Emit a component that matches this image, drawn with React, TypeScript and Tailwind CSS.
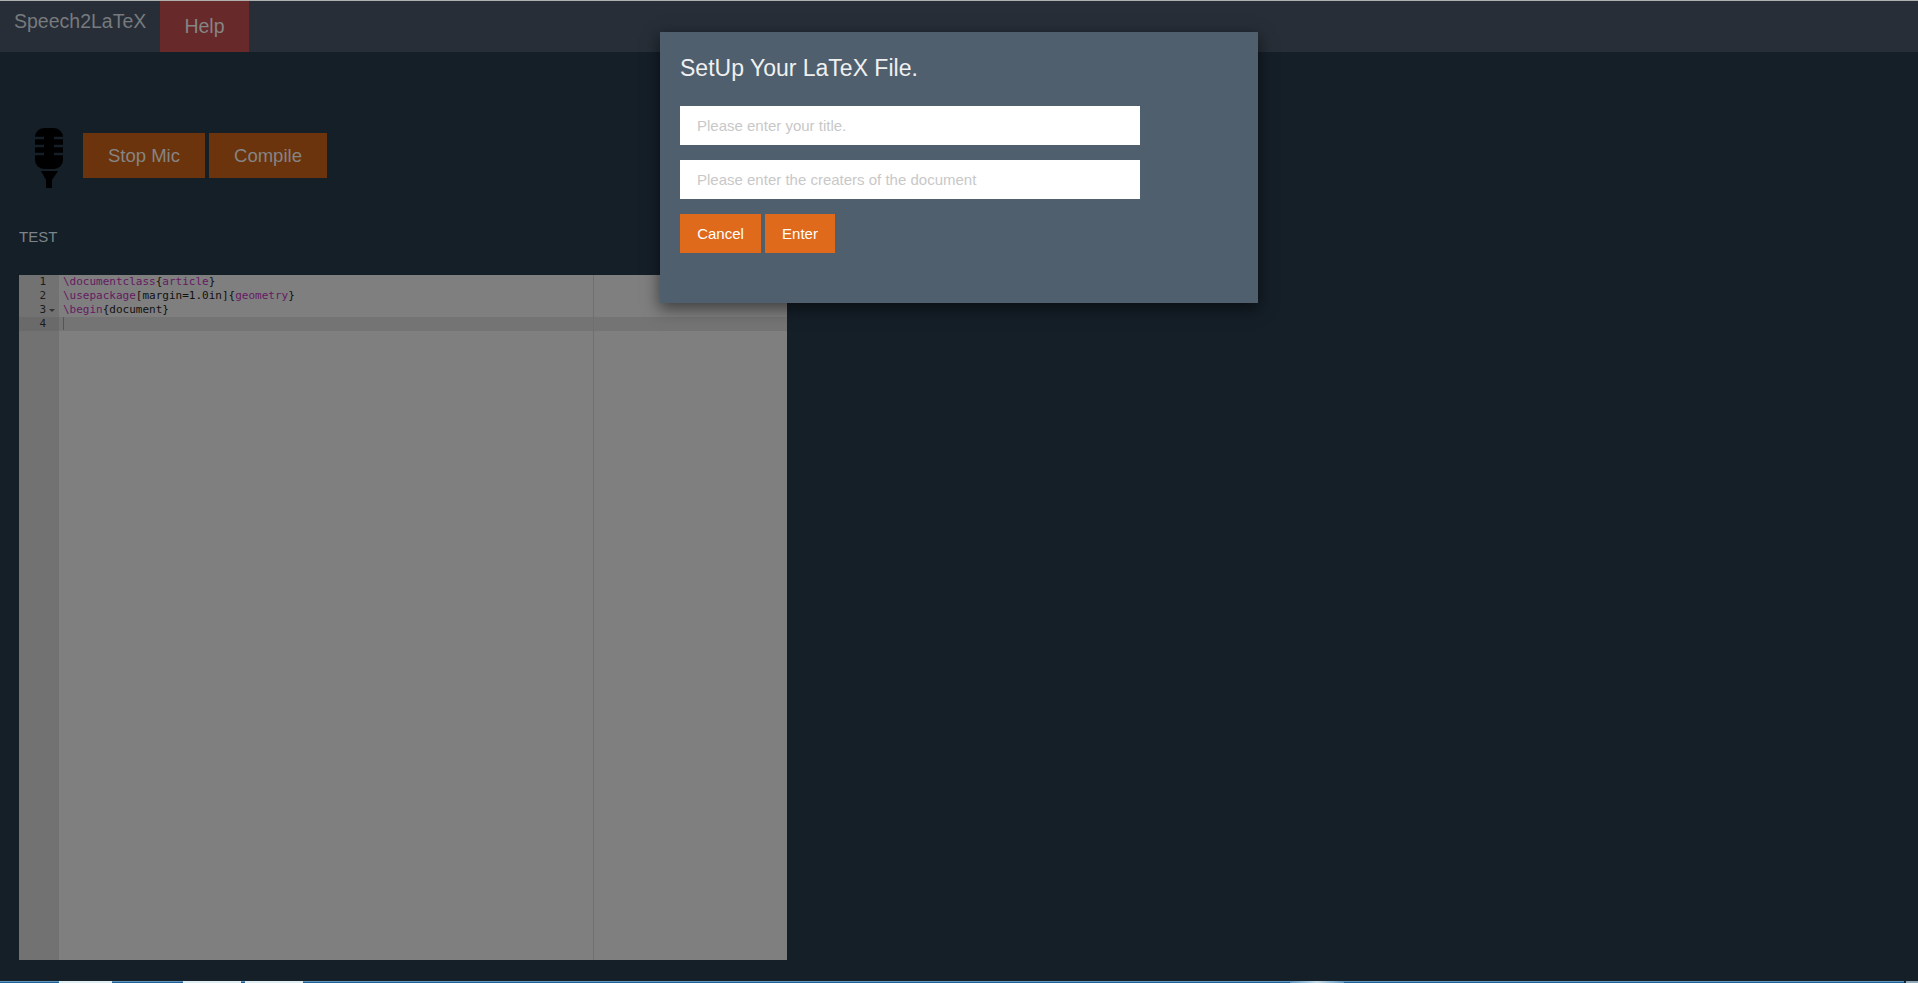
import React from 'react';

const Mic = () => (
  <svg width="28" height="60" viewBox="0 0 28 60" className="shrink-0">
    <rect x="0" y="0" width="28" height="41" rx="9" fill="#000" />
    <path d="M0 10h9M0 18h9M0 26h9M19 10h9M19 18h9M19 26h9" stroke="#151f28" strokeWidth="2.5" />
    <path d="M6 43h17l-6 9v8h-6v-8z" fill="#000" />
  </svg>
);

const Kw = ({ children }: { children: React.ReactNode }) => <span className="text-[#651a62]">{children}</span>;

const codeLines = [
  <><Kw>\documentclass</Kw>{'{'}<Kw>article</Kw>{'}'}</>,
  <><Kw>\usepackage</Kw>[margin=1.0in]{'{'}<Kw>geometry</Kw>{'}'}</>,
  <><Kw>\begin</Kw>{'{document}'}</>,
  <span className="inline-block w-px h-[13px] bg-[#555] align-top" />,
];

const Editor = () => (
  <div className="ml-[19px] mt-[28px] w-[768px] h-[685px] bg-[#7f7f7f] flex font-['DejaVu_Sans_Mono','Liberation_Mono',monospace] text-[11px] leading-[14px] text-[#111]">
    <div className="w-10 h-full bg-[#727272] shrink-0">
      {codeLines.map((_, i) => (
        <div key={i} className={`relative h-[14px] pr-[13px] text-right text-[#1c1c1c] ${i === 3 ? 'bg-[#6a6a6a]' : ''}`}>
          {i + 1}
          {i === 2 && <span className="absolute right-[4px] top-[6px] border-x-[3px] border-t-[3px] border-x-transparent border-t-[#333]" />}
        </div>
      ))}
    </div>
    <div className="relative flex-1 overflow-hidden">
      {codeLines.map((line, i) => (
        <div key={i} className={`h-[14px] pl-[4px] whitespace-pre ${i === 3 ? 'bg-[#747474]' : ''}`}>
          {line}
        </div>
      ))}
      {/* print margin */}
      <div className="absolute left-[534px] top-0 bottom-0 w-px bg-[#6f6f6f]" />
    </div>
  </div>
);

const SetupModal = () => (
  <div className="absolute left-[659px] top-[30px] w-[600px] h-[273px] bg-[#4f5f6e] bg-clip-padding border border-transparent shadow-[0_5px_15px_rgba(0,0,0,0.5)] pl-5 pt-[22px]">
    <h2 className="text-[23px] leading-[28px] text-[#f0f0f0]">SetUp Your LaTeX File.</h2>
    <input
      className="block mt-6 w-[460px] h-[39px] bg-white px-[17px] text-[15px] outline-none placeholder:text-[#c8c8c8]"
      placeholder="Please enter your title."
      readOnly
    />
    <input
      className="block mt-[15px] w-[460px] h-[39px] bg-white px-[17px] text-[15px] outline-none placeholder:text-[#c8c8c8]"
      placeholder="Please enter the creaters of the document"
      readOnly
    />
    <div className="flex gap-1 mt-[15px]">
      <button className="w-[81px] h-[39px] pt-px bg-[#e06a1b] text-[15px] text-white">Cancel</button>
      <button className="w-[70px] h-[39px] pt-px bg-[#e06a1b] text-[15px] text-white">Enter</button>
    </div>
  </div>
);

export default function App() {
  return (
    <div className="relative h-[983px] overflow-hidden bg-[#151f28] font-['Liberation_Sans',Arial,sans-serif] border-t border-[#b0b0b0]">
      {/* Navbar */}
      <nav className="flex h-[51px] bg-[#272e37]">
        <span className="w-[160px] pl-[14px] pt-2 text-[19.5px] leading-[24px] text-[#777a7e]">Speech2LaTeX</span>
        <a className="w-[89px] pt-[13px] text-center text-[19.5px] leading-[24px] text-[#858585] bg-[#672929]">Help</a>
      </nav>

      {/* Mic controls */}
      <div className="flex items-start mt-[76px] pl-[35px]">
        <Mic />
        <div className="flex gap-1 ml-5 mt-[5px]">
          <button className="w-[122px] h-[45px] bg-[#6b340c] text-[18.5px] text-[#858585]">Stop Mic</button>
          <button className="w-[118px] h-[45px] bg-[#6b340c] text-[18.5px] text-[#858585]">Compile</button>
        </div>
      </div>

      <p className="ml-[19px] mt-[39px] text-[15px] leading-[20px] text-[#7c8489]">TEST</p>

      <Editor />

      <SetupModal />

      {/* Taskbar sliver at the bottom edge */}
      <div className="absolute left-0 right-0 bottom-0 h-[2px] flex border-t border-[#5f97c0] bg-[#1f5f95]">
        <div className="w-[59px]" />
        <div className="w-[53px] -mt-px h-[2px] bg-[#dfeef2]" />
        <div className="w-[71px]" />
        <div className="w-[58px] -mt-px h-[2px] bg-[#dfeef2]" />
        <div className="w-1" />
        <div className="w-[58px] -mt-px h-[2px] bg-[#dfeef2]" />
        <div className="w-[987px]" />
        <div className="w-[54px] -mt-px h-[2px] bg-gradient-to-r from-[#5f97c0] via-[#c4dcea] to-[#5f97c0]" />
        <div className="flex-1" />
        <div className="w-[2px] -mt-px h-[2px] bg-[#10283c]" />
        <div className="w-3 -mt-px h-[2px] bg-[#8ea7b8]" />
      </div>
    </div>
  );
}
